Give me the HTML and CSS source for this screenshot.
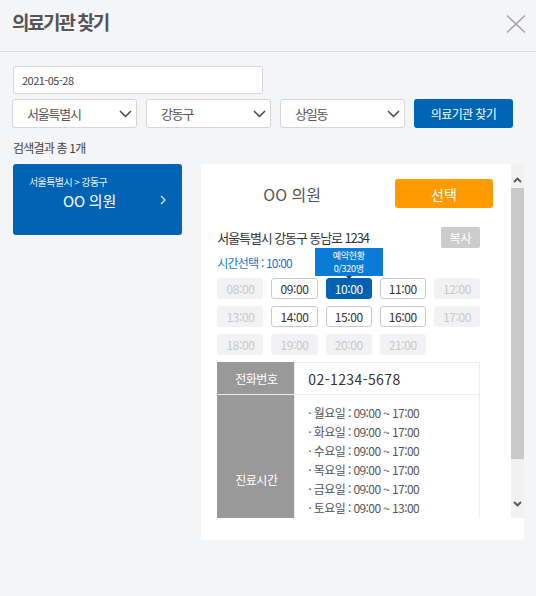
FILE: index.html
```html
<!DOCTYPE html>
<html lang="ko">
<head>
<meta charset="utf-8">
<title>의료기관 찾기</title>
<link rel="stylesheet" href="styles.css">
</head>
<body>
<div class="page">
  <header class="head">
    <h1 class="title">의료기관 찾기</h1>
    <button class="close" aria-label="닫기">
      <svg width="20" height="18" viewBox="0 0 20 18"><path d="M1 0.5 L19 17.5 M19 0.5 L1 17.5" stroke="#a0a0a0" stroke-width="1.4" fill="none"/></svg>
    </button>
  </header>
  <main class="body">
    <div class="date">2021-05-28</div>
    <div class="filters">
      <div class="select"><span>서울특별시</span><svg width="13" height="8" viewBox="0 0 13 8"><path d="M1 1 L6.5 6.5 L12 1" stroke="#444" stroke-width="1.5" fill="none"/></svg></div>
      <div class="select"><span>강동구</span><svg width="13" height="8" viewBox="0 0 13 8"><path d="M1 1 L6.5 6.5 L12 1" stroke="#444" stroke-width="1.5" fill="none"/></svg></div>
      <div class="select"><span>상일동</span><svg width="13" height="8" viewBox="0 0 13 8"><path d="M1 1 L6.5 6.5 L12 1" stroke="#444" stroke-width="1.5" fill="none"/></svg></div>
      <button class="search">의료기관 찾기</button>
    </div>
    <p class="count">검색결과 총 1개</p>
    <div class="results">
      <div class="card">
        <div class="crumb">서울특별시 &gt; 강동구</div>
        <div class="card-row">
          <span class="card-name">OO 의원</span>
          <svg width="6" height="10" viewBox="0 0 6 10"><path d="M1 1 L5 5 L1 9" stroke="#d6e4f3" stroke-width="1.4" fill="none"/></svg>
        </div>
      </div>
      <section class="panel">
        <div class="viewport">
          <div class="content">
            <div class="name-row">
              <h2 class="name">OO 의원</h2>
              <button class="pick">선택</button>
            </div>
            <div class="addr-row">
              <span class="addr">서울특별시 강동구 동남로 1234</span>
              <button class="copy">복사</button>
            </div>
            <p class="picked">시간선택 : 10:00</p>
            <div class="times">
              <span class="slot off">08:00</span>
              <span class="slot">09:00</span>
              <span class="slot on">10:00<span class="tip"><span class="tip-line">예약현황</span><span class="tip-line">0/320명</span></span></span>
              <span class="slot">11:00</span>
              <span class="slot off">12:00</span>
              <span class="slot off">13:00</span>
              <span class="slot">14:00</span>
              <span class="slot">15:00</span>
              <span class="slot">16:00</span>
              <span class="slot off">17:00</span>
              <span class="slot off">18:00</span>
              <span class="slot off">19:00</span>
              <span class="slot off">20:00</span>
              <span class="slot off">21:00</span>
            </div>
            <table class="info">
              <tr><th>전화번호</th><td class="phone">02-1234-5678</td></tr>
              <tr><th>진료시간</th><td class="hours">
                <div>· 월요일 : 09:00 ~ 17:00</div>
                <div>· 화요일 : 09:00 ~ 17:00</div>
                <div>· 수요일 : 09:00 ~ 17:00</div>
                <div>· 목요일 : 09:00 ~ 17:00</div>
                <div>· 금요일 : 09:00 ~ 17:00</div>
                <div>· 토요일 : 09:00 ~ 13:00</div>
              </td></tr>
            </table>
          </div>
          <div class="sbar">
            <span class="arrow up"><svg width="9" height="6" viewBox="0 0 9 6"><path d="M1 5 L4.5 1.5 L8 5" stroke="#555" stroke-width="1.8" fill="none"/></svg></span>
            <span class="track"><span class="thumb"></span></span>
            <span class="arrow down"><svg width="9" height="6" viewBox="0 0 9 6"><path d="M1 1 L4.5 4.5 L8 1" stroke="#555" stroke-width="1.8" fill="none"/></svg></span>
          </div>
        </div>
      </section>
    </div>
  </main>
</div>
</body>
</html>
```
FILE: styles.css
```css
* { box-sizing: border-box; }
html, body { margin: 0; padding: 0; }
body {
  background: #f4f5f7;
  font-family: "Noto Sans CJK KR", "Noto Sans", sans-serif;
  color: #333;
}
button { font-family: inherit; border: 0; cursor: pointer; padding: 0; }

.head {
  height: 52px;
  border-bottom: 1px solid #d9dbde;
  display: flex;
  justify-content: space-between;
  align-items: flex-start;
  padding: 0 10px 0 12px;
}
.title {
  margin: 0;
  padding-top: 11px;
  font-size: 19px;
  line-height: 22px;
  font-weight: 700;
  color: #555;
  letter-spacing: -2px;
}
.close {
  background: none;
  margin-top: 15px;
  width: 20px;
  height: 18px;
  display: block;
}
.close svg { display: block; }

.body { padding: 14px 12px 0 12px; }

.date {
  width: 250px;
  height: 28px;
  margin-left: 1px;
  background: #fff;
  border: 1px solid #d4d6da;
  border-radius: 3px;
  padding-left: 8px;
  font-size: 11px;
  line-height: 26px;
  color: #444;
  letter-spacing: -0.5px;
}

.filters {
  display: flex;
  gap: 9px;
  margin-top: 5px;
}
.select {
  width: 125px;
  height: 29px;
  background: #fff;
  border: 1px solid #d4d6da;
  border-radius: 3px;
  display: flex;
  align-items: center;
  justify-content: space-between;
  padding: 0 4px 0 14px;
  font-size: 13px;
  color: #555;
  letter-spacing: -1.2px;
}
.select svg { display: block; }
.search {
  width: 99px;
  height: 29px;
  background: #0065b5;
  color: #fff;
  border-radius: 3px;
  font-size: 12px;
  letter-spacing: -0.6px;
}

.count {
  margin: 12px 0 0 1px;
  font-size: 12px;
  line-height: 16px;
  color: #444;
  letter-spacing: -0.8px;
}

.results {
  display: flex;
  align-items: flex-start;
  gap: 19px;
  margin-top: 8px;
  padding-left: 1px;
}

.card {
  width: 170px;
  height: 71px;
  background: #0063b4;
  border-radius: 3px;
  padding: 12px 0 0 16px;
  color: #fff;
}
.crumb {
  font-size: 10px;
  line-height: 12px;
  letter-spacing: -0.6px;
  color: #e8f0f8;
}
.card-row {
  display: flex;
  align-items: center;
  justify-content: space-between;
  margin-top: 2px;
  padding: 0 16px 0 34px;
  height: 20px;
}
.card-name { font-size: 15px; letter-spacing: -0.2px; }
.card-row svg { display: block; }

.panel {
  width: 324px;
  height: 376px;
  background: #fff;
  border-radius: 4px;
  padding-bottom: 22px;
}
.viewport {
  display: flex;
  height: 354px;
}
.content {
  flex: 1;
  overflow: hidden;
  padding: 15px 31px 0 16px;
}

.name-row {
  display: flex;
  align-items: center;
  justify-content: space-between;
  height: 29px;
  margin-right: -13px;
}
.name {
  margin: 0 0 0 46px;
  font-size: 16px;
  font-weight: 400;
  color: #555;
}
.pick {
  width: 98px;
  height: 29px;
  background: #ff9a00;
  color: #fff;
  border-radius: 3px;
  font-size: 14px;
}

.addr-row {
  display: flex;
  align-items: center;
  justify-content: space-between;
  height: 21px;
  margin-top: 19px;
}
.addr { font-size: 13px; letter-spacing: -1.1px; color: #333; }
.copy {
  width: 39px;
  height: 21px;
  background: #cccccc;
  color: #fff;
  border-radius: 2px;
  font-size: 12px;
}

.picked {
  margin: 7px 0 0;
  font-size: 12px;
  line-height: 16px;
  color: #1a74c6;
  letter-spacing: -0.8px;
}

.times {
  display: grid;
  grid-template-columns: repeat(5, 1fr);
  grid-auto-rows: 21px;
  gap: 7px 8px;
  margin-top: 7px;
}
.slot {
  position: relative;
  display: flex;
  align-items: center;
  justify-content: center;
  border: 1px solid #c9cad2;
  border-radius: 3px;
  background: #fff;
  font-size: 12px;
  color: #333;
  letter-spacing: -0.4px;
}
.slot.off {
  background: #f2f2f4;
  border-color: #f2f2f4;
  color: #c8c8c8;
}
.slot.on {
  background: #0062b0;
  border-color: #0062b0;
  color: #fff;
}
.tip {
  position: absolute;
  bottom: calc(100% + 3px);
  left: 50%;
  transform: translateX(-50%);
  width: 68px;
  height: 28px;
  background: #0b7bd8;
  color: #fff;
  display: flex;
  flex-direction: column;
  align-items: center;
  justify-content: center;
  text-align: center;
  letter-spacing: -0.3px;
}
.tip-line {
  display: block;
  font-size: 9px;
  line-height: 13px;
  height: 13px;
}
.tip::after {
  content: "";
  position: absolute;
  top: 100%;
  left: 50%;
  margin-left: -3px;
  border: 3px solid transparent;
  border-top-color: #2b3f56;
}

.info {
  width: 100%;
  border-collapse: collapse;
  margin-top: 7px;
}
.info th {
  width: 77px;
  background: #999;
  color: #fff;
  font-weight: 400;
  font-size: 12px;
  border: 1px solid #ebebf2;
  border-left-color: #999;
  letter-spacing: -0.5px;
}
.info tr:first-child th { border-top-color: #999; height: 32px; }
.info td {
  border: 1px solid #ebebf2;
  padding-left: 13px;
}
.phone { font-size: 14px; color: #333; letter-spacing: 0.4px; }
.hours {
  padding-top: 8px;
  padding-bottom: 46px;
  font-size: 12px;
  line-height: 19px;
  color: #555;
  letter-spacing: -0.6px;
}

.sbar {
  width: 13px;
  display: flex;
  flex-direction: column;
  background: #f1f1f1;
}
.arrow {
  display: flex;
  justify-content: center;
}
.arrow.up { height: 24px; padding-top: 13px; }
.arrow.down { height: 28px; padding-top: 11px; }
.arrow svg { display: block; }
.track { flex: 1; }
.thumb {
  display: block;
  height: 271px;
  background: #c9c9c9;
}
```
